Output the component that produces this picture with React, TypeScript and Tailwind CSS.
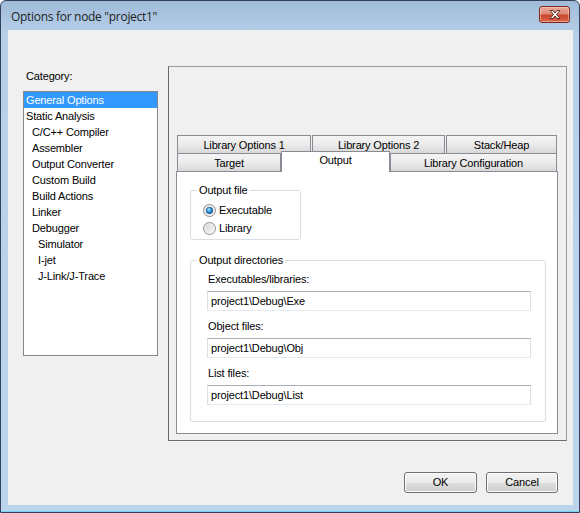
import type { ReactNode } from 'react';

const categories: { label: string; level: number }[] = [
  { label: 'General Options', level: 0 },
  { label: 'Static Analysis', level: 0 },
  { label: 'C/C++ Compiler', level: 1 },
  { label: 'Assembler', level: 1 },
  { label: 'Output Converter', level: 1 },
  { label: 'Custom Build', level: 1 },
  { label: 'Build Actions', level: 1 },
  { label: 'Linker', level: 1 },
  { label: 'Debugger', level: 1 },
  { label: 'Simulator', level: 2 },
  { label: 'I-jet', level: 2 },
  { label: 'J-Link/J-Trace', level: 2 },
];

const indent = ['pl-[2px]', 'pl-[8px]', 'pl-[14px]'];

function Radio({ checked }: { checked: boolean }) {
  return (
    <svg width="13" height="13" viewBox="0 0 13 13" className="shrink-0">
      <defs>
        <linearGradient id="radioFill" x1="0" y1="0" x2="1" y2="1">
          <stop offset="0" stopColor="#d2d2d2" />
          <stop offset="1" stopColor="#fcfcfc" />
        </linearGradient>
        <radialGradient id="radioDot" cx="0.4" cy="0.35" r="0.75">
          <stop offset="0" stopColor="#b4ecff" />
          <stop offset="0.45" stopColor="#3194dc" />
          <stop offset="1" stopColor="#134a86" />
        </radialGradient>
      </defs>
      <circle cx="6.5" cy="6.5" r="6" fill="url(#radioFill)" stroke="#8e8f8f" />
      <circle cx="6.5" cy="6.5" r="4.6" fill="none" stroke="#f4f4f4" strokeWidth="0.8" />
      {checked && <circle cx="6.5" cy="6.5" r="3.3" fill="url(#radioDot)" stroke="#1a4f82" strokeWidth="0.6" />}
    </svg>
  );
}

function Tab({ label, className, selected }: { label: string; className: string; selected?: boolean }) {
  if (selected) {
    return (
      <div
        className={`relative z-10 -mt-[2px] flex h-[21px] shrink-0 justify-center border border-b-0 border-[#898c95] bg-white pt-[1px] leading-[14px] ${className}`}
      >
        {label}
      </div>
    );
  }
  return (
    <div
      className={`flex h-[18px] shrink-0 items-center justify-center border border-b-0 border-[#898c95] bg-linear-to-b from-[#f4f4f4] via-[#ebebeb] to-[#d8d8d8] leading-[14px] ${className}`}
    >
      {label}
    </div>
  );
}

function Group({ label, className, children }: { label: string; className: string; children: ReactNode }) {
  return (
    <div className={`relative rounded-[3px] border border-[#d5dfe5] ${className}`}>
      <span className="absolute -top-[8px] left-[6px] bg-white px-[2px] leading-[14px]">{label}</span>
      {children}
    </div>
  );
}

function PathField({ label, value, first }: { label: string; value: string; first?: boolean }) {
  return (
    <>
      <div className={`${first ? 'mt-[10px]' : 'mt-[7px]'} pl-[17px] leading-[17px]`}>{label}</div>
      <div className="ml-[16px] mt-[3px] flex h-[20px] w-[324px] items-center border border-[#dbdfe6] border-t-[#abadb3] border-b-[#e3e9ef] pl-[3px]">
        {value}
      </div>
    </>
  );
}

function DialogButton({ label, className }: { label: string; className: string }) {
  return (
    <button
      type="button"
      className={`flex h-[21px] items-center justify-center rounded-[3px] border border-[#707070] bg-[linear-gradient(to_bottom,#f2f2f2_0%,#ebebeb_50%,#dddddd_51%,#cfcfcf_100%)] text-[11px] shadow-[inset_0_0_0_1px_#fcfcfc] ${className}`}
    >
      {label}
    </button>
  );
}

export default function App() {
  return (
    <div className="flex h-[513px] w-[580px] flex-col overflow-hidden rounded-t-[6px] border border-[#33425a] bg-[linear-gradient(to_bottom,#9fbbd9_0px,#b8d0e9_34px,#bcd4ec_100%)] font-['Liberation_Sans',Arial,sans-serif] text-[11px] tracking-[-0.15px] text-black shadow-[inset_0_-1px_0_#6fd3f2]">
      {/* title bar */}
      <div className="flex h-[29px] shrink-0 items-center justify-between pl-[10px] pr-[9px]">
        <span className="pt-[2px] font-['Open_Sans',sans-serif] text-[12px] tracking-[-0.3px] text-[#1e1e1e]">
          Options for node "project1"
        </span>
        <div className="mt-[-2px] flex h-[17px] w-[31px] items-center justify-center rounded-[3px] border border-[#7d2a1d] bg-[linear-gradient(to_bottom,#eba999_0%,#dc8b77_45%,#c8472f_55%,#d9664a_100%)] shadow-[inset_0_0_0_1px_rgba(255,230,220,0.45)]">
          <svg width="14" height="11" viewBox="0 0 14 11">
            <path
              d="M2 1.5 L5 1.5 L7 4 L9 1.5 L12 1.5 L8.6 5.5 L12 9.5 L9 9.5 L7 7 L5 9.5 L2 9.5 L5.4 5.5 Z"
              fill="#ffffff"
              stroke="#5a2119"
              strokeWidth="0.9"
              strokeLinejoin="round"
            />
          </svg>
        </div>
      </div>

      {/* client area */}
      <div className="ml-[7px] mr-[6px] flex h-[475px] shrink-0 flex-col bg-[#f0f0f0]">
        <div className="flex pt-[36px]">
          {/* category list */}
          <div className="ml-[15px] flex w-[135px] flex-col">
            <div className="ml-[3px] mt-[2px] leading-[16px]">Category:</div>
            <div className="mt-[7px] h-[265px] border border-[#828790] bg-white">
              {categories.map((c, i) => (
                <div
                  key={c.label}
                  className={`h-[16px] leading-[16px] ${indent[c.level]} ${i === 0 ? 'bg-[#3399ff] text-white' : ''}`}
                >
                  {c.label}
                </div>
              ))}
            </div>
          </div>

          {/* options frame */}
          <div className="ml-[10px] flex h-[375px] w-[399px] flex-col border border-[#9a9a9a] border-b-[#6a6a6a] border-l-[#6a6a6a] pb-[6px] pl-[7px] pr-[8px] pt-[68px]">
            <div className="ml-[1px] flex gap-[1px]">
              <Tab label="Library Options 1" className="w-[134px]" />
              <Tab label="Library Options 2" className="w-[133px]" />
              <Tab label="Stack/Heap" className="w-[111px]" />
            </div>
            <div className="ml-[1px] flex h-[18px]">
              <Tab label="Target" className="w-[104px]" />
              <Tab label="Output" className="w-[109px]" selected />
              <Tab label="Library Configuration" className="w-[167px]" />
            </div>
            <div className="flex flex-1 flex-col border border-[#898c95] bg-white pl-[13px] pt-[18px]">
              <Group label="Output file" className="h-[50px] w-[111px] pl-[12px] pt-[10px]">
                <div className="flex h-[18px] items-center gap-[3px]">
                  <Radio checked />
                  <span>Executable</span>
                </div>
                <div className="flex h-[18px] items-center gap-[3px]">
                  <Radio checked={false} />
                  <span>Library</span>
                </div>
              </Group>
              <Group label="Output directories" className="mt-[20px] flex h-[162px] w-[356px] flex-col">
                <PathField label="Executables/libraries:" value="project1\Debug\Exe" first />
                <PathField label="Object files:" value="project1\Debug\Obj" />
                <PathField label="List files:" value="project1\Debug\List" />
              </Group>
            </div>
          </div>
        </div>

        {/* buttons */}
        <div className="mt-[31px] flex justify-end gap-[9px] pr-[15px]">
          <DialogButton label="OK" className="w-[73px]" />
          <DialogButton label="Cancel" className="w-[72px]" />
        </div>
      </div>
    </div>
  );
}
